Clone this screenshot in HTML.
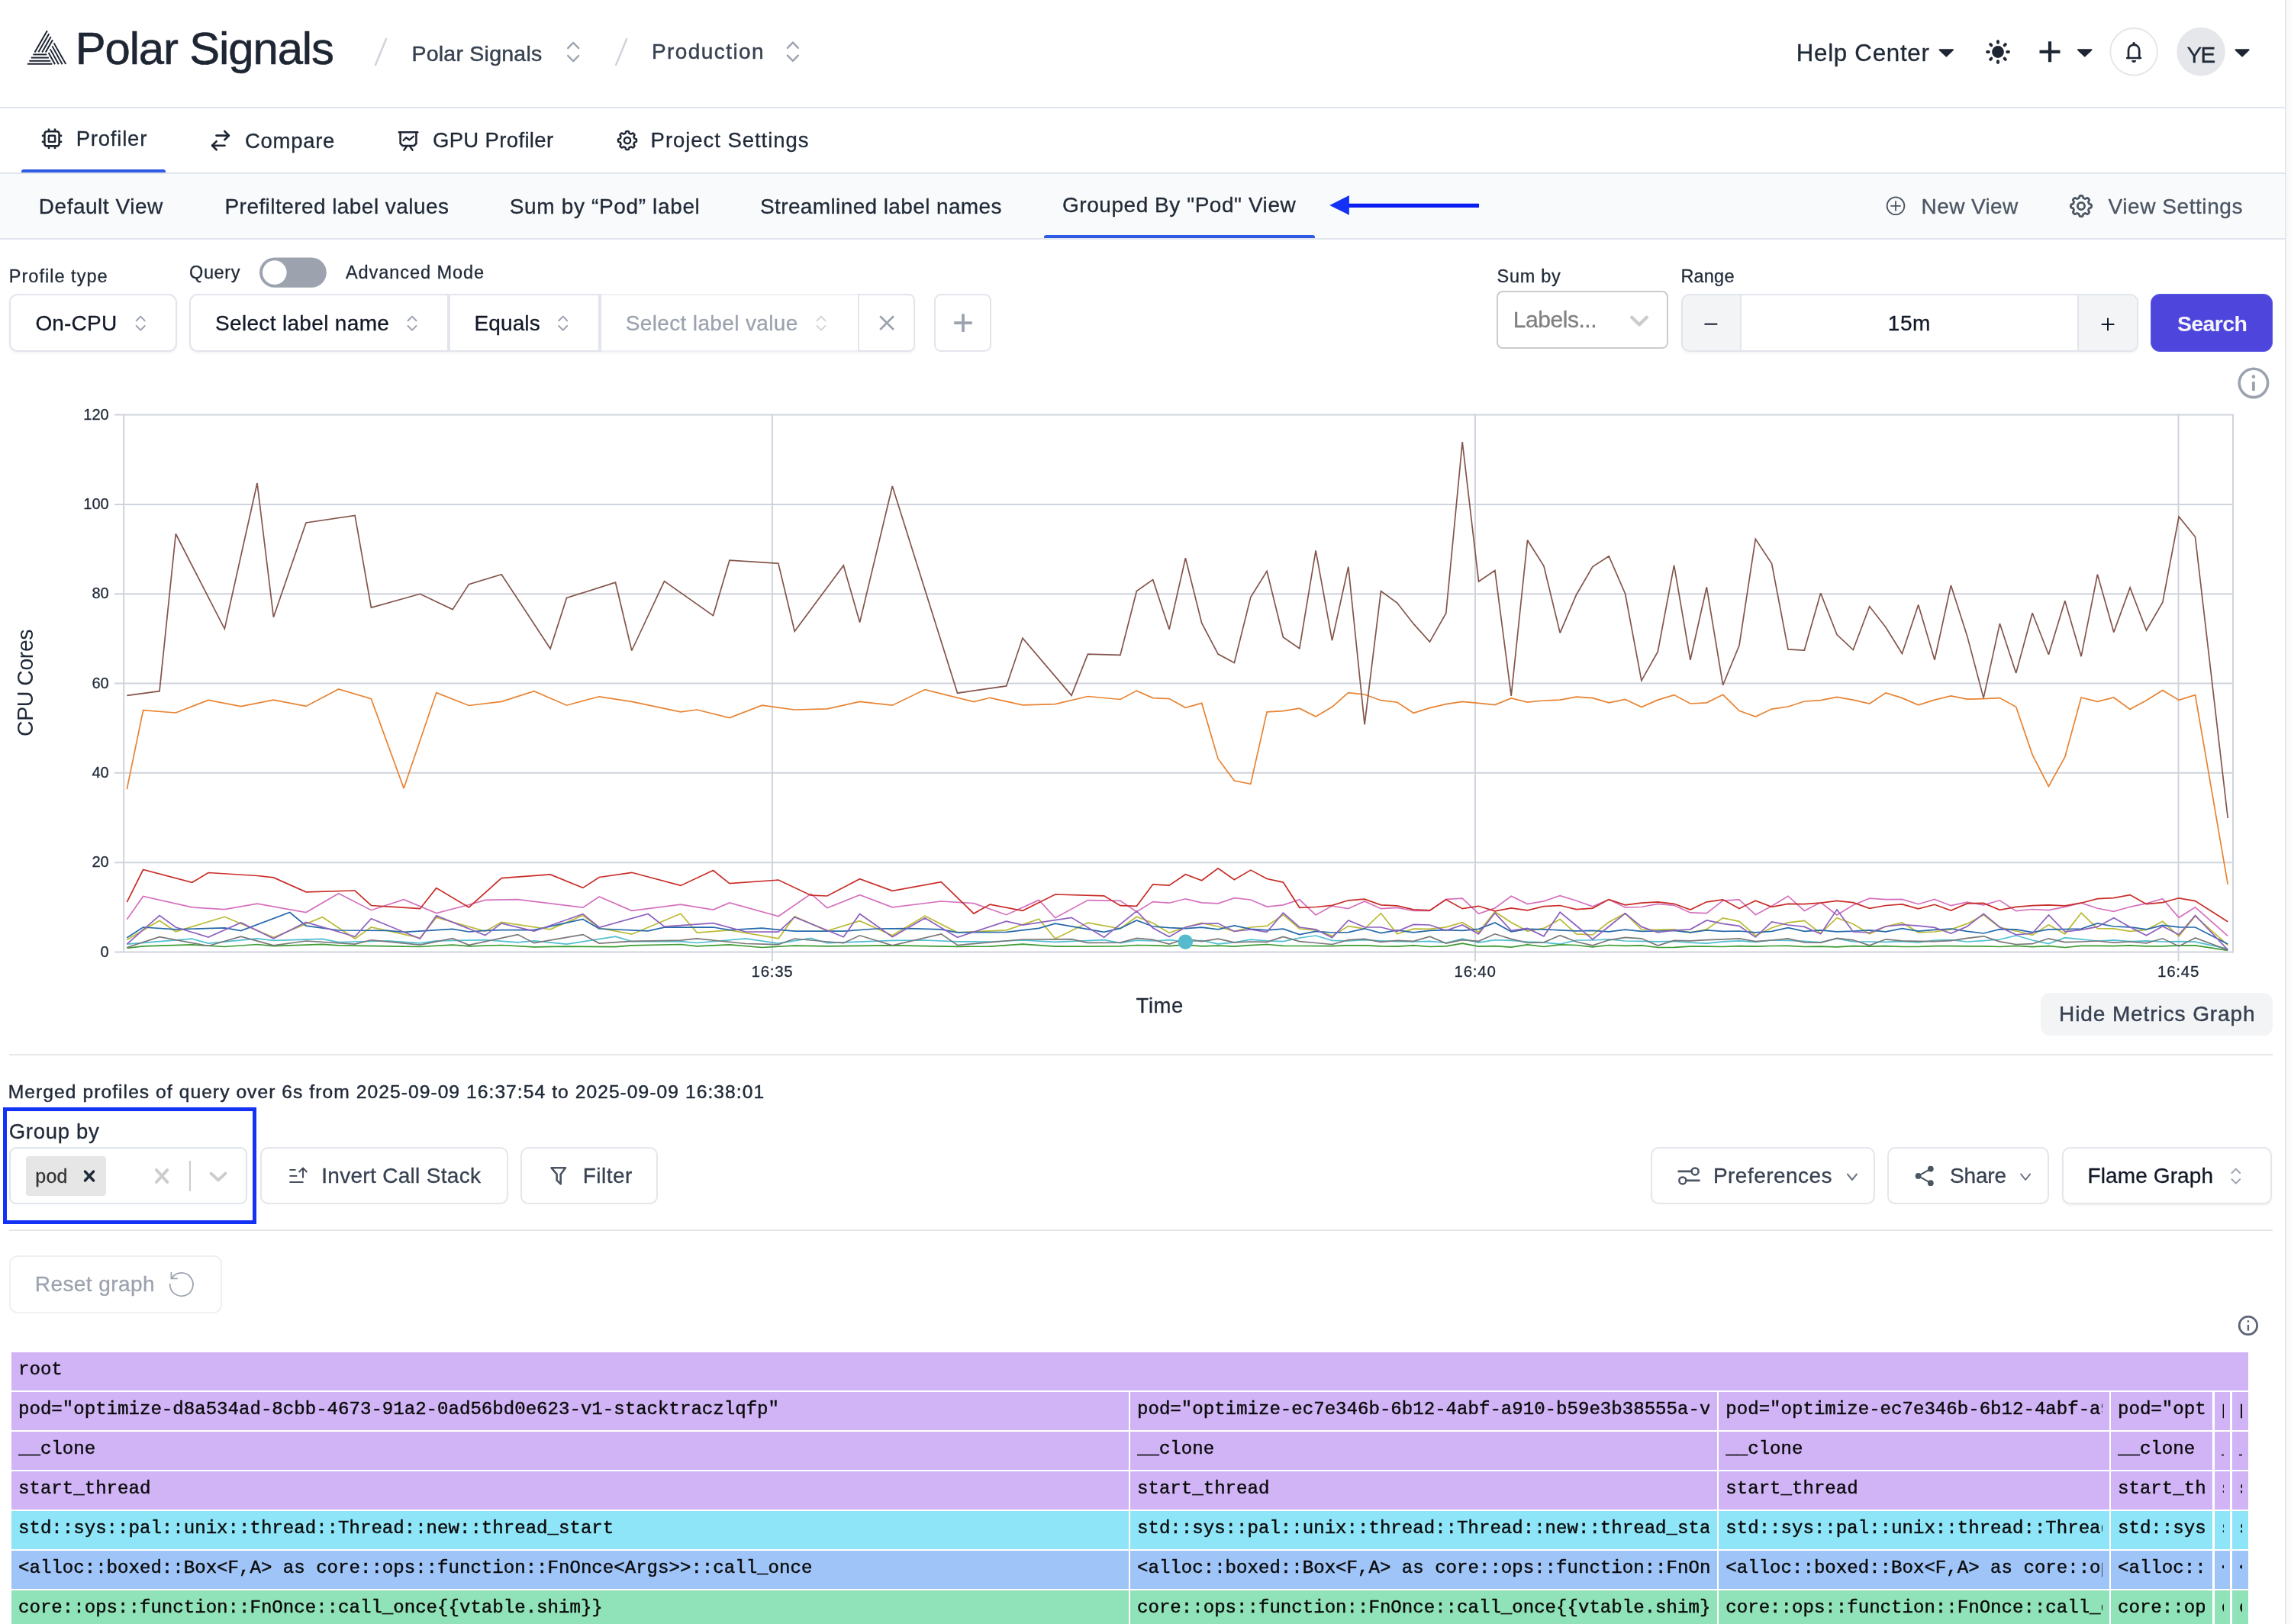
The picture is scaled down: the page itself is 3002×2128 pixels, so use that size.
<!DOCTYPE html><html><head><meta charset="utf-8"><title>Polar Signals</title><style>

html,body{margin:0;padding:0;background:#fff;}
body{width:3002px;height:2128px;position:relative;overflow:hidden;font-family:"Liberation Sans", sans-serif;}
.b{position:absolute;}
.t{position:absolute;line-height:1;white-space:nowrap;font-family:"Liberation Sans", sans-serif;}
.f{position:absolute;overflow:hidden;}
.f span{position:absolute;left:9px;top:0;height:100%;overflow:hidden;white-space:pre;font-family:"Liberation Mono", monospace;font-size:24.08px;line-height:45.2px;color:#0a0a0a;-webkit-text-stroke:0.42px #0a0a0a;}
svg{position:absolute;left:0;top:0;}
.rot{position:absolute;transform-origin:0 0;transform:rotate(-90deg);}

</style></head><body>
<div id="page" style="position:absolute;left:0;top:0;width:3002px;height:2128px;will-change:transform">
<div class="b" style="left:2994px;top:0px;width:2px;height:2128px;background:#e8e8e8;"></div>
<div class="b" style="left:2996px;top:0px;width:6px;height:2128px;background:#fafafa;"></div>
<div class="b" style="left:0px;top:140px;width:2994px;height:2px;background:#e1e5ee;"></div>
<div class="b" style="left:0px;top:226px;width:2994px;height:2px;background:#e1e5ee;"></div>
<div class="b" style="left:28px;top:222px;width:189px;height:4px;background:#2f5ae3;border-radius:3px 3px 0 0;"></div>
<div class="b" style="left:0px;top:228px;width:2994px;height:84px;background:#f9fafb;"></div>
<div class="b" style="left:0px;top:312px;width:2994px;height:2px;background:#e1e5ee;"></div>
<div class="b" style="left:1368px;top:308px;width:355px;height:4px;background:#2f5ae3;border-radius:3px 3px 0 0;"></div>
<div class="b" style="left:12px;top:385px;width:219.5px;height:75.5px;background:#fff;border:2px solid #e2e5ec;border-radius:11px;box-sizing:border-box;box-shadow:0 2px 3px rgba(0,0,0,0.05);"></div>
<div class="b" style="left:248.2px;top:385px;width:951.3px;height:75.5px;background:#fff;border:2px solid #e2e5ec;border-radius:11px 8px 8px 11px;box-sizing:border-box;box-shadow:0 2px 3px rgba(0,0,0,0.05);"></div>
<div class="b" style="left:586px;top:385px;width:3.6px;height:75.5px;background:#e2e5ec;"></div>
<div class="b" style="left:784.2px;top:385px;width:3.6px;height:75.5px;background:#e2e5ec;"></div>
<div class="b" style="left:1124px;top:385px;width:2px;height:75.5px;background:#e2e5ec;"></div>
<div class="b" style="left:787.8px;top:385px;width:336.2px;height:2px;background:#eef0f4;"></div>
<div class="b" style="left:787.8px;top:458.5px;width:336.2px;height:2px;background:#eef0f4;"></div>
<div class="b" style="left:1224.2px;top:385px;width:75.3px;height:75.5px;background:#fff;border:2px solid #e2e5ec;border-radius:9px;box-sizing:border-box;"></div>
<div class="b" style="left:1960.9px;top:381px;width:224.8px;height:75.6px;background:#fff;border:2px solid #cccccc;border-radius:8px;box-sizing:border-box;"></div>
<div class="b" style="left:2202.5px;top:385px;width:599px;height:75.5px;background:#fff;border:2px solid #e2e5ec;border-radius:11px;box-sizing:border-box;overflow:hidden;box-shadow:0 2px 3px rgba(0,0,0,0.05);"></div>
<div class="b" style="left:2204.5px;top:387px;width:76px;height:71.5px;background:#f3f4f6;border-radius:9px 0 0 9px;"></div>
<div class="b" style="left:2724px;top:387px;width:75.5px;height:71.5px;background:#f3f4f6;border-radius:0 9px 9px 0;"></div>
<div class="b" style="left:2280.3px;top:387px;width:2px;height:71.5px;background:#e2e5ec;"></div>
<div class="b" style="left:2722.1px;top:387px;width:2px;height:71.5px;background:#e2e5ec;"></div>
<div class="b" style="left:2818px;top:384.9px;width:160px;height:76px;background:#4e46dc;border:1.6px solid #5a5ae4;border-radius:12px;box-sizing:border-box;"></div>
<div class="b" style="left:2674px;top:1301px;width:304px;height:56px;background:#f3f4f6;border-radius:12px;"></div>
<div class="b" style="left:12px;top:1381px;width:2966px;height:2px;background:#e4e6ea;"></div>
<div class="b" style="left:12px;top:1611px;width:2966px;height:2px;background:#e4e6ea;"></div>
<div class="b" style="left:4.3px;top:1451px;width:332px;height:152.5px;border:5px solid #1432f5;box-sizing:border-box;"></div>
<div class="b" style="left:12.3px;top:1503.3px;width:311.5px;height:75.2px;background:#fff;border:2px solid #dfe4ee;border-radius:9px;box-sizing:border-box;"></div>
<div class="b" style="left:33.9px;top:1515px;width:105.1px;height:51.8px;background:#e6e6e6;border-radius:4px;"></div>
<div class="b" style="left:248px;top:1521.3px;width:2px;height:39.4px;background:#cccccc;"></div>
<div class="b" style="left:340.5px;top:1503.2px;width:325.2px;height:75.2px;background:#fff;border:2px solid #e4e6eb;border-radius:10.5px;box-sizing:border-box;"></div>
<div class="b" style="left:682.2px;top:1503.2px;width:180.2px;height:75.2px;background:#fff;border:2px solid #e4e6eb;border-radius:10.5px;box-sizing:border-box;"></div>
<div class="b" style="left:2162.8px;top:1503.2px;width:293.8px;height:75.2px;background:#fff;border:2px solid #e4e6eb;border-radius:10.5px;box-sizing:border-box;"></div>
<div class="b" style="left:2472.9px;top:1503.2px;width:212.5px;height:75.2px;background:#fff;border:2px solid #e4e6eb;border-radius:10.5px;box-sizing:border-box;"></div>
<div class="b" style="left:2702px;top:1503.2px;width:275.4px;height:75.2px;background:#fff;border:2px solid #e4e6eb;border-radius:10.5px;box-sizing:border-box;box-shadow:0 2px 3px rgba(0,0,0,0.05);"></div>
<div class="b" style="left:12.2px;top:1645px;width:279.2px;height:75.5px;background:#fff;border:2px solid #eef0f3;border-radius:11px;box-sizing:border-box;"></div>
<div class="f" style="left:15px;top:1772px;width:2931px;height:50px;background:#d0b4f6"><span style="width:2912px">root</span></div>
<div class="f" style="left:15px;top:1824px;width:1463.7px;height:50px;background:#d0b4f6"><span style="width:1444.7px">pod="optimize-d8a534ad-8cbb-4673-91a2-0ad56bd0e623-v1-stacktraczlqfp"</span></div>
<div class="f" style="left:1481px;top:1824px;width:769px;height:50px;background:#d0b4f6"><span style="width:750px">pod="optimize-ec7e346b-6b12-4abf-a910-b59e3b38555a-v1-stacktracxxxxx"</span></div>
<div class="f" style="left:2252.3px;top:1824px;width:511.7px;height:50px;background:#d0b4f6"><span style="width:494.1px">pod="optimize-ec7e346b-6b12-4abf-a910-b59e3b38555a-v1-stacktracxxxxx"</span></div>
<div class="f" style="left:2766px;top:1824px;width:133.2px;height:50px;background:#d0b4f6"><span style="width:114.2px">pod="optimize-ec7e346b-6b12-4abf-a910-b59e3b38555a-v1-stacktracxxxxx"</span></div>
<div class="f" style="left:2901.7px;top:1824px;width:20.6px;height:50px;background:#d0b4f6"><span style="width:3.3px">pod="optimize-ec7e346b-6b12-4abf-a910-b59e3b38555a-v1-stacktracxxxxx"</span></div>
<div class="f" style="left:2924.9px;top:1824px;width:21.1px;height:50px;background:#d0b4f6"><span style="width:4.3px">pod="optimize-ec7e346b-6b12-4abf-a910-b59e3b38555a-v1-stacktracxxxxx"</span></div>
<div class="f" style="left:15px;top:1876px;width:1463.7px;height:50px;background:#d0b4f6"><span style="width:1444.7px">__clone</span></div>
<div class="f" style="left:1481px;top:1876px;width:769px;height:50px;background:#d0b4f6"><span style="width:750px">__clone</span></div>
<div class="f" style="left:2252.3px;top:1876px;width:511.7px;height:50px;background:#d0b4f6"><span style="width:494.1px">__clone</span></div>
<div class="f" style="left:2766px;top:1876px;width:133.2px;height:50px;background:#d0b4f6"><span style="width:114.2px">__clone</span></div>
<div class="f" style="left:2901.7px;top:1876px;width:20.6px;height:50px;background:#d0b4f6"><span style="width:3.3px">__clone</span></div>
<div class="f" style="left:2924.9px;top:1876px;width:21.1px;height:50px;background:#d0b4f6"><span style="width:4.3px">__clone</span></div>
<div class="f" style="left:15px;top:1928px;width:1463.7px;height:50px;background:#d0b4f6"><span style="width:1444.7px">start_thread</span></div>
<div class="f" style="left:1481px;top:1928px;width:769px;height:50px;background:#d0b4f6"><span style="width:750px">start_thread</span></div>
<div class="f" style="left:2252.3px;top:1928px;width:511.7px;height:50px;background:#d0b4f6"><span style="width:494.1px">start_thread</span></div>
<div class="f" style="left:2766px;top:1928px;width:133.2px;height:50px;background:#d0b4f6"><span style="width:114.2px">start_thread</span></div>
<div class="f" style="left:2901.7px;top:1928px;width:20.6px;height:50px;background:#d0b4f6"><span style="width:3.3px">start_thread</span></div>
<div class="f" style="left:2924.9px;top:1928px;width:21.1px;height:50px;background:#d0b4f6"><span style="width:4.3px">start_thread</span></div>
<div class="f" style="left:15px;top:1980px;width:1463.7px;height:50px;background:#8ee5f7"><span style="width:1444.7px">std::sys::pal::unix::thread::Thread::new::thread_start</span></div>
<div class="f" style="left:1481px;top:1980px;width:769px;height:50px;background:#8ee5f7"><span style="width:750px">std::sys::pal::unix::thread::Thread::new::thread_start</span></div>
<div class="f" style="left:2252.3px;top:1980px;width:511.7px;height:50px;background:#8ee5f7"><span style="width:494.1px">std::sys::pal::unix::thread::Thread::new::thread_start</span></div>
<div class="f" style="left:2766px;top:1980px;width:133.2px;height:50px;background:#8ee5f7"><span style="width:114.2px">std::sys::pal::unix::thread::Thread::new::thread_start</span></div>
<div class="f" style="left:2901.7px;top:1980px;width:20.6px;height:50px;background:#8ee5f7"><span style="width:3.3px">std::sys::pal::unix::thread::Thread::new::thread_start</span></div>
<div class="f" style="left:2924.9px;top:1980px;width:21.1px;height:50px;background:#8ee5f7"><span style="width:4.3px">std::sys::pal::unix::thread::Thread::new::thread_start</span></div>
<div class="f" style="left:15px;top:2032px;width:1463.7px;height:50px;background:#9ec4f8"><span style="width:1444.7px">&lt;alloc::boxed::Box&lt;F,A&gt; as core::ops::function::FnOnce&lt;Args&gt;&gt;::call_once</span></div>
<div class="f" style="left:1481px;top:2032px;width:769px;height:50px;background:#9ec4f8"><span style="width:750px">&lt;alloc::boxed::Box&lt;F,A&gt; as core::ops::function::FnOnce&lt;Args&gt;&gt;::call_once</span></div>
<div class="f" style="left:2252.3px;top:2032px;width:511.7px;height:50px;background:#9ec4f8"><span style="width:494.1px">&lt;alloc::boxed::Box&lt;F,A&gt; as core::ops::function::FnOnce&lt;Args&gt;&gt;::call_once</span></div>
<div class="f" style="left:2766px;top:2032px;width:133.2px;height:50px;background:#9ec4f8"><span style="width:114.2px">&lt;alloc::boxed::Box&lt;F,A&gt; as core::ops::function::FnOnce&lt;Args&gt;&gt;::call_once</span></div>
<div class="f" style="left:2901.7px;top:2032px;width:20.6px;height:50px;background:#9ec4f8"><span style="width:3.3px">&lt;alloc::boxed::Box&lt;F,A&gt; as core::ops::function::FnOnce&lt;Args&gt;&gt;::call_once</span></div>
<div class="f" style="left:2924.9px;top:2032px;width:21.1px;height:50px;background:#9ec4f8"><span style="width:4.3px">&lt;alloc::boxed::Box&lt;F,A&gt; as core::ops::function::FnOnce&lt;Args&gt;&gt;::call_once</span></div>
<div class="f" style="left:15px;top:2084px;width:1463.7px;height:44px;background:#90e2b8"><span style="width:1444.7px">core::ops::function::FnOnce::call_once{{vtable.shim}}</span></div>
<div class="f" style="left:1481px;top:2084px;width:769px;height:44px;background:#90e2b8"><span style="width:750px">core::ops::function::FnOnce::call_once{{vtable.shim}}</span></div>
<div class="f" style="left:2252.3px;top:2084px;width:511.7px;height:44px;background:#90e2b8"><span style="width:494.1px">core::ops::function::FnOnce::call_once{{vtable.shim}}</span></div>
<div class="f" style="left:2766px;top:2084px;width:133.2px;height:44px;background:#90e2b8"><span style="width:114.2px">core::ops::function::FnOnce::call_once{{vtable.shim}}</span></div>
<div class="f" style="left:2901.7px;top:2084px;width:20.6px;height:44px;background:#90e2b8"><span style="width:3.3px">core::ops::function::FnOnce::call_once{{vtable.shim}}</span></div>
<div class="f" style="left:2924.9px;top:2084px;width:21.1px;height:44px;background:#90e2b8"><span style="width:4.3px">core::ops::function::FnOnce::call_once{{vtable.shim}}</span></div>
<svg width="3002" height="2128" viewBox="0 0 3002 2128">
<line x1="45.5502" y1="68.4331" x2="61.8498" y2="40.1669" stroke="#1e2533" stroke-width="1.95" stroke-linecap="butt"/>
<line x1="50.3499" y1="68.233" x2="64.2501" y2="44.167" stroke="#1e2533" stroke-width="1.95" stroke-linecap="butt"/>
<line x1="55.1534" y1="68.4349" x2="66.6466" y2="48.1651" stroke="#1e2533" stroke-width="1.95" stroke-linecap="butt"/>
<line x1="59.7519" y1="68.4341" x2="69.0481" y2="52.1659" stroke="#1e2533" stroke-width="1.95" stroke-linecap="butt"/>
<line x1="70.5533" y1="56.3651" x2="86.2467" y2="84.0349" stroke="#1e2533" stroke-width="1.95" stroke-linecap="butt"/>
<line x1="68.3569" y1="60.3631" x2="81.6431" y2="84.2369" stroke="#1e2533" stroke-width="1.95" stroke-linecap="butt"/>
<line x1="65.7564" y1="64.3634" x2="76.8436" y2="84.2366" stroke="#1e2533" stroke-width="1.95" stroke-linecap="butt"/>
<line x1="63.5572" y1="68.9629" x2="72.0428" y2="84.2371" stroke="#1e2533" stroke-width="1.95" stroke-linecap="butt"/>
<line x1="43.3" y1="71.4" x2="61.3" y2="71.4" stroke="#1e2533" stroke-width="1.95" stroke-linecap="butt"/>
<line x1="40.7" y1="75.6" x2="63.9" y2="75.6" stroke="#1e2533" stroke-width="1.95" stroke-linecap="butt"/>
<line x1="38.3" y1="79.8" x2="66.1" y2="79.8" stroke="#1e2533" stroke-width="1.95" stroke-linecap="butt"/>
<line x1="35.9" y1="83.8" x2="68.3" y2="83.8" stroke="#1e2533" stroke-width="1.95" stroke-linecap="butt"/>
<line x1="492" y1="85" x2="506" y2="51" stroke="#d1d5db" stroke-width="2.6" stroke-linecap="round"/>
<line x1="807.2" y1="85" x2="821.2" y2="51" stroke="#d1d5db" stroke-width="2.6" stroke-linecap="round"/>
<path d="M744.2 63.2 L751.2 56 L758.2 63.2" fill="none" stroke="#9ca3af" stroke-width="2.4" stroke-linejoin="round" stroke-linecap="round"/>
<path d="M744.2 73 L751.2 80.2 L758.2 73" fill="none" stroke="#9ca3af" stroke-width="2.4" stroke-linejoin="round" stroke-linecap="round"/>
<path d="M1031.9 62.8 L1038.9 55.6 L1045.9 62.8" fill="none" stroke="#9ca3af" stroke-width="2.4" stroke-linejoin="round" stroke-linecap="round"/>
<path d="M1031.9 72.6 L1038.9 79.8 L1045.9 72.6" fill="none" stroke="#9ca3af" stroke-width="2.4" stroke-linejoin="round" stroke-linecap="round"/>
<path d="M2541.6 65.2 L2559 65.2 L2550.3 73.6 Z" fill="#1e2533" stroke="#1e2533" stroke-width="2" stroke-linejoin="round" stroke-linecap="round" />
<path d="M2723 65.2 L2740.5 65.2 L2731.75 73.6 Z" fill="#1e2533" stroke="#1e2533" stroke-width="2" stroke-linejoin="round" stroke-linecap="round" />
<path d="M2929.5 65.2 L2946.6 65.2 L2938.05 73.6 Z" fill="#1e2533" stroke="#1e2533" stroke-width="2" stroke-linejoin="round" stroke-linecap="round" />
<circle cx="2618" cy="68" r="7.9" fill="#1e2533" stroke="none" stroke-width="0"/>
<line x1="2630.2" y1="68" x2="2631.9" y2="68" stroke="#1e2533" stroke-width="3.9" stroke-linecap="round"/>
<line x1="2626.63" y1="76.6267" x2="2627.83" y2="77.8288" stroke="#1e2533" stroke-width="3.9" stroke-linecap="round"/>
<line x1="2618" y1="80.2" x2="2618" y2="81.9" stroke="#1e2533" stroke-width="3.9" stroke-linecap="round"/>
<line x1="2609.37" y1="76.6267" x2="2608.17" y2="77.8288" stroke="#1e2533" stroke-width="3.9" stroke-linecap="round"/>
<line x1="2605.8" y1="68" x2="2604.1" y2="68" stroke="#1e2533" stroke-width="3.9" stroke-linecap="round"/>
<line x1="2609.37" y1="59.3733" x2="2608.17" y2="58.1712" stroke="#1e2533" stroke-width="3.9" stroke-linecap="round"/>
<line x1="2618" y1="55.8" x2="2618" y2="54.1" stroke="#1e2533" stroke-width="3.9" stroke-linecap="round"/>
<line x1="2626.63" y1="59.3733" x2="2627.83" y2="58.1712" stroke="#1e2533" stroke-width="3.9" stroke-linecap="round"/>
<line x1="2672.5" y1="67.8" x2="2699.5" y2="67.8" stroke="#1e2533" stroke-width="4.2" stroke-linecap="butt"/>
<line x1="2686" y1="54.3" x2="2686" y2="81.3" stroke="#1e2533" stroke-width="4.2" stroke-linecap="butt"/>
<circle cx="2796.1" cy="67.7" r="30.8" fill="#fff" stroke="#e5e7eb" stroke-width="2"/>
<path d="M2789 76 L2789 65.6 A7.1 7.1 0 0 1 2803.2 65.6 L2803.2 76" fill="none" stroke="#1e2533" stroke-width="2.7" stroke-linejoin="round" stroke-linecap="round" />
<line x1="2787.2" y1="76" x2="2805" y2="76" stroke="#1e2533" stroke-width="2.7" stroke-linecap="round"/>
<circle cx="2796.1" cy="56.6" r="1.7" fill="#1e2533" stroke="none" stroke-width="0"/>
<path d="M2793.2 79 A2.9 2.9 0 0 0 2799 79 Z" fill="#1e2533" stroke="none" stroke-width="0" stroke-linejoin="round" stroke-linecap="round" />
<circle cx="2884" cy="67.7" r="31.8" fill="#e5e7eb" stroke="none" stroke-width="0"/>
<rect x="58.4" y="172.2" width="19.2" height="19.2" rx="3.2" fill="none" stroke="#1e2533" stroke-width="2.6"/>
<rect x="63.9" y="177.7" width="8.2" height="8.2" rx="0.5" fill="none" stroke="#1e2533" stroke-width="2.4"/>
<line x1="64" y1="168.5" x2="64" y2="171.2" stroke="#1e2533" stroke-width="2.5" stroke-linecap="butt"/>
<line x1="64" y1="192.4" x2="64" y2="195.1" stroke="#1e2533" stroke-width="2.5" stroke-linecap="butt"/>
<line x1="72" y1="168.5" x2="72" y2="171.2" stroke="#1e2533" stroke-width="2.5" stroke-linecap="butt"/>
<line x1="72" y1="192.4" x2="72" y2="195.1" stroke="#1e2533" stroke-width="2.5" stroke-linecap="butt"/>
<line x1="54.8" y1="177.8" x2="57.4" y2="177.8" stroke="#1e2533" stroke-width="2.5" stroke-linecap="butt"/>
<line x1="78.6" y1="177.8" x2="81.2" y2="177.8" stroke="#1e2533" stroke-width="2.5" stroke-linecap="butt"/>
<line x1="54.8" y1="185.8" x2="57.4" y2="185.8" stroke="#1e2533" stroke-width="2.5" stroke-linecap="butt"/>
<line x1="78.6" y1="185.8" x2="81.2" y2="185.8" stroke="#1e2533" stroke-width="2.5" stroke-linecap="butt"/>
<line x1="283.5" y1="177.6" x2="299.5" y2="177.6" stroke="#1e2533" stroke-width="2.6" stroke-linecap="round"/>
<path d="M294.3 172 L300 177.6 L294.3 183.2" fill="none" stroke="#1e2533" stroke-width="2.6" stroke-linejoin="round" stroke-linecap="round"/>
<line x1="278.5" y1="190.7" x2="294.5" y2="190.7" stroke="#1e2533" stroke-width="2.6" stroke-linecap="round"/>
<path d="M283.7 185.1 L278 190.7 L283.7 196.3" fill="none" stroke="#1e2533" stroke-width="2.6" stroke-linejoin="round" stroke-linecap="round"/>
<line x1="522.8" y1="173.2" x2="547.2" y2="173.2" stroke="#1e2533" stroke-width="2.5" stroke-linecap="round"/>
<path d="M524.6 173.2 L524.6 188 L527.6 191 L542.4 191 L545.4 188 L545.4 173.2" fill="none" stroke="#1e2533" stroke-width="2.5" stroke-linejoin="round" stroke-linecap="round"/>
<path d="M529.5 196.6 L533 191.5" fill="none" stroke="#1e2533" stroke-width="2.5" stroke-linejoin="round" stroke-linecap="round"/>
<path d="M540.5 196.6 L537 191.5" fill="none" stroke="#1e2533" stroke-width="2.5" stroke-linejoin="round" stroke-linecap="round"/>
<path d="M528.6 184 L532.2 180.3 L536.3 183.3 L541.8 178.8" fill="none" stroke="#1e2533" stroke-width="2.3" stroke-linejoin="round" stroke-linecap="round"/>
<path d="M822 171.9 L822.47 171.91 L822.95 171.97 L823.41 172.11 L823.82 172.5 L824.11 173.38 L824.34 174.26 L824.63 174.68 L824.96 174.88 L825.31 175.03 L825.66 175.17 L826 175.31 L826.35 175.46 L826.73 175.55 L827.23 175.46 L828.02 175 L828.84 174.58 L829.41 174.6 L829.84 174.82 L830.21 175.12 L830.56 175.44 L830.88 175.79 L831.18 176.16 L831.4 176.59 L831.42 177.16 L831 177.98 L830.54 178.77 L830.45 179.27 L830.54 179.65 L830.69 180 L830.83 180.34 L830.97 180.69 L831.12 181.04 L831.32 181.37 L831.74 181.66 L832.62 181.89 L833.5 182.18 L833.89 182.59 L834.03 183.05 L834.09 183.53 L834.1 184 L834.09 184.47 L834.03 184.95 L833.89 185.41 L833.5 185.82 L832.62 186.11 L831.74 186.34 L831.32 186.63 L831.12 186.96 L830.97 187.31 L830.83 187.66 L830.69 188 L830.54 188.35 L830.45 188.73 L830.54 189.23 L831 190.02 L831.42 190.84 L831.4 191.41 L831.18 191.84 L830.88 192.21 L830.56 192.56 L830.21 192.88 L829.84 193.18 L829.41 193.4 L828.84 193.42 L828.02 193 L827.23 192.54 L826.73 192.45 L826.35 192.54 L826 192.69 L825.66 192.83 L825.31 192.97 L824.96 193.12 L824.63 193.32 L824.34 193.74 L824.11 194.62 L823.82 195.5 L823.41 195.89 L822.95 196.03 L822.47 196.09 L822 196.1 L821.53 196.09 L821.05 196.03 L820.59 195.89 L820.18 195.5 L819.89 194.62 L819.66 193.74 L819.37 193.32 L819.04 193.12 L818.69 192.97 L818.34 192.83 L818 192.69 L817.65 192.54 L817.27 192.45 L816.77 192.54 L815.98 193 L815.16 193.42 L814.59 193.4 L814.16 193.18 L813.79 192.88 L813.44 192.56 L813.12 192.21 L812.82 191.84 L812.6 191.41 L812.58 190.84 L813 190.02 L813.46 189.23 L813.55 188.73 L813.46 188.35 L813.31 188 L813.17 187.66 L813.03 187.31 L812.88 186.96 L812.68 186.63 L812.26 186.34 L811.38 186.11 L810.5 185.82 L810.11 185.41 L809.97 184.95 L809.91 184.47 L809.9 184 L809.91 183.53 L809.97 183.05 L810.11 182.59 L810.5 182.18 L811.38 181.89 L812.26 181.66 L812.68 181.37 L812.88 181.04 L813.03 180.69 L813.17 180.34 L813.31 180 L813.46 179.65 L813.55 179.27 L813.46 178.77 L813 177.98 L812.58 177.16 L812.6 176.59 L812.82 176.16 L813.12 175.79 L813.44 175.44 L813.79 175.12 L814.16 174.82 L814.59 174.6 L815.16 174.58 L815.98 175 L816.77 175.46 L817.27 175.55 L817.65 175.46 L818 175.31 L818.34 175.17 L818.69 175.03 L819.04 174.88 L819.37 174.68 L819.66 174.26 L819.89 173.38 L820.18 172.5 L820.59 172.11 L821.05 171.97 L821.53 171.91 Z" fill="none" stroke="#1e2533" stroke-width="2.5" stroke-linejoin="round" stroke-linecap="round"/>
<circle cx="822" cy="184" r="4.1" fill="none" stroke="#1e2533" stroke-width="2.5"/>
<circle cx="2484" cy="269.8" r="11.4" fill="none" stroke="#4b5563" stroke-width="1.8"/>
<line x1="2478" y1="269.8" x2="2490" y2="269.8" stroke="#4b5563" stroke-width="1.8" stroke-linecap="round"/>
<line x1="2484" y1="263.8" x2="2484" y2="275.8" stroke="#4b5563" stroke-width="1.8" stroke-linecap="round"/>
<path d="M2727 256.4 L2727.53 256.42 L2728.06 256.48 L2728.58 256.63 L2729.05 257.07 L2729.37 258.06 L2729.63 259.05 L2729.95 259.53 L2730.33 259.75 L2730.72 259.91 L2731.11 260.07 L2731.5 260.24 L2731.89 260.4 L2732.32 260.5 L2732.88 260.4 L2733.76 259.88 L2734.69 259.41 L2735.33 259.43 L2735.81 259.68 L2736.23 260.02 L2736.62 260.38 L2736.98 260.77 L2737.32 261.19 L2737.57 261.67 L2737.59 262.31 L2737.12 263.24 L2736.6 264.12 L2736.5 264.68 L2736.6 265.11 L2736.76 265.5 L2736.93 265.89 L2737.09 266.28 L2737.25 266.67 L2737.47 267.05 L2737.95 267.37 L2738.94 267.63 L2739.93 267.95 L2740.37 268.42 L2740.52 268.94 L2740.58 269.47 L2740.6 270 L2740.58 270.53 L2740.52 271.06 L2740.37 271.58 L2739.93 272.05 L2738.94 272.37 L2737.95 272.63 L2737.47 272.95 L2737.25 273.33 L2737.09 273.72 L2736.93 274.11 L2736.76 274.5 L2736.6 274.89 L2736.5 275.32 L2736.6 275.88 L2737.12 276.76 L2737.59 277.69 L2737.57 278.33 L2737.32 278.81 L2736.98 279.23 L2736.62 279.62 L2736.23 279.98 L2735.81 280.32 L2735.33 280.57 L2734.69 280.59 L2733.76 280.12 L2732.88 279.6 L2732.32 279.5 L2731.89 279.6 L2731.5 279.76 L2731.11 279.93 L2730.72 280.09 L2730.33 280.25 L2729.95 280.47 L2729.63 280.95 L2729.37 281.94 L2729.05 282.93 L2728.58 283.37 L2728.06 283.52 L2727.53 283.58 L2727 283.6 L2726.47 283.58 L2725.94 283.52 L2725.42 283.37 L2724.95 282.93 L2724.63 281.94 L2724.37 280.95 L2724.05 280.47 L2723.67 280.25 L2723.28 280.09 L2722.89 279.93 L2722.5 279.76 L2722.11 279.6 L2721.68 279.5 L2721.12 279.6 L2720.24 280.12 L2719.31 280.59 L2718.67 280.57 L2718.19 280.32 L2717.77 279.98 L2717.38 279.62 L2717.02 279.23 L2716.68 278.81 L2716.43 278.33 L2716.41 277.69 L2716.88 276.76 L2717.4 275.88 L2717.5 275.32 L2717.4 274.89 L2717.24 274.5 L2717.07 274.11 L2716.91 273.72 L2716.75 273.33 L2716.53 272.95 L2716.05 272.63 L2715.06 272.37 L2714.07 272.05 L2713.63 271.58 L2713.48 271.06 L2713.42 270.53 L2713.4 270 L2713.42 269.47 L2713.48 268.94 L2713.63 268.42 L2714.07 267.95 L2715.06 267.63 L2716.05 267.37 L2716.53 267.05 L2716.75 266.67 L2716.91 266.28 L2717.07 265.89 L2717.24 265.5 L2717.4 265.11 L2717.5 264.68 L2717.4 264.12 L2716.88 263.24 L2716.41 262.31 L2716.43 261.67 L2716.68 261.19 L2717.02 260.77 L2717.38 260.38 L2717.77 260.02 L2718.19 259.68 L2718.67 259.43 L2719.31 259.41 L2720.24 259.88 L2721.12 260.4 L2721.68 260.5 L2722.11 260.4 L2722.5 260.24 L2722.89 260.07 L2723.28 259.91 L2723.67 259.75 L2724.05 259.53 L2724.37 259.05 L2724.63 258.06 L2724.95 257.07 L2725.42 256.63 L2725.94 256.48 L2726.47 256.42 Z" fill="none" stroke="#4b5563" stroke-width="2.8" stroke-linejoin="round" stroke-linecap="round"/>
<circle cx="2727" cy="270" r="4.6" fill="none" stroke="#4b5563" stroke-width="2.8"/>
<line x1="1764" y1="269.35" x2="1938" y2="269.35" stroke="#0a1ef1" stroke-width="5.1" stroke-linecap="butt"/>
<path d="M1742.2 268.9 L1767.9 256 L1767.9 281.8 Z" fill="#1432f5" stroke="none" stroke-width="0" stroke-linejoin="round" stroke-linecap="round" />
<rect x="340" y="337.4" width="87.8" height="39.4" rx="19.7" fill="#9ca3af" stroke="none" stroke-width="0"/>
<circle cx="359.8" cy="357.1" r="15.8" fill="#fff" stroke="none" stroke-width="0"/>
<path d="M178.7 420.2 L184.2 414.6 L189.7 420.2" fill="none" stroke="#9ca3af" stroke-width="2" stroke-linejoin="round" stroke-linecap="round"/>
<path d="M178.7 427 L184.2 432.6 L189.7 427" fill="none" stroke="#9ca3af" stroke-width="2" stroke-linejoin="round" stroke-linecap="round"/>
<path d="M534.5 420.2 L540 414.6 L545.5 420.2" fill="none" stroke="#9ca3af" stroke-width="2" stroke-linejoin="round" stroke-linecap="round"/>
<path d="M534.5 427 L540 432.6 L545.5 427" fill="none" stroke="#9ca3af" stroke-width="2" stroke-linejoin="round" stroke-linecap="round"/>
<path d="M732.2 420.2 L737.7 414.6 L743.2 420.2" fill="none" stroke="#9ca3af" stroke-width="2" stroke-linejoin="round" stroke-linecap="round"/>
<path d="M732.2 427 L737.7 432.6 L743.2 427" fill="none" stroke="#9ca3af" stroke-width="2" stroke-linejoin="round" stroke-linecap="round"/>
<path d="M1070.5 420.2 L1076 414.6 L1081.5 420.2" fill="none" stroke="#d1d5db" stroke-width="2" stroke-linejoin="round" stroke-linecap="round"/>
<path d="M1070.5 427 L1076 432.6 L1081.5 427" fill="none" stroke="#d1d5db" stroke-width="2" stroke-linejoin="round" stroke-linecap="round"/>
<line x1="1153.2" y1="414.2" x2="1171" y2="432" stroke="#9ca3af" stroke-width="2.7" stroke-linecap="butt"/>
<line x1="1171" y1="414.2" x2="1153.2" y2="432" stroke="#9ca3af" stroke-width="2.7" stroke-linecap="butt"/>
<line x1="1250.2" y1="423.1" x2="1273.8" y2="423.1" stroke="#9ca3af" stroke-width="3.8" stroke-linecap="butt"/>
<line x1="1262" y1="411.3" x2="1262" y2="434.9" stroke="#9ca3af" stroke-width="3.8" stroke-linecap="butt"/>
<path d="M2138.2 415.8 L2148 425.4 L2157.8 415.8" fill="none" stroke="#cccccc" stroke-width="4.4" stroke-linejoin="round" stroke-linecap="round"/>
<line x1="2233.5" y1="424.7" x2="2250.3" y2="424.7" stroke="#111827" stroke-width="2" stroke-linecap="butt"/>
<line x1="2753.7" y1="425" x2="2770.4" y2="425" stroke="#111827" stroke-width="2" stroke-linecap="butt"/>
<line x1="2762" y1="416.8" x2="2762" y2="433.2" stroke="#111827" stroke-width="2" stroke-linecap="butt"/>
<circle cx="2952.9" cy="501.9" r="18.7" fill="none" stroke="#9ca3af" stroke-width="3.6"/>
<line x1="2952.9" y1="500.2" x2="2952.9" y2="512.1" stroke="#9ca3af" stroke-width="3.9" stroke-linecap="butt"/>
<circle cx="2952.9" cy="493.6" r="2.3" fill="#9ca3af" stroke="none" stroke-width="0"/>
<line x1="150" y1="1247.5" x2="2926" y2="1247.5" stroke="#cfd3db" stroke-width="2"/>
<line x1="150" y1="1130.18" x2="2926" y2="1130.18" stroke="#cfd3db" stroke-width="2"/>
<line x1="150" y1="1012.86" x2="2926" y2="1012.86" stroke="#cfd3db" stroke-width="2"/>
<line x1="150" y1="895.54" x2="2926" y2="895.54" stroke="#cfd3db" stroke-width="2"/>
<line x1="150" y1="778.22" x2="2926" y2="778.22" stroke="#cfd3db" stroke-width="2"/>
<line x1="150" y1="660.9" x2="2926" y2="660.9" stroke="#cfd3db" stroke-width="2"/>
<line x1="150" y1="543.58" x2="2926" y2="543.58" stroke="#cfd3db" stroke-width="2"/>
<line x1="162.2" y1="542.6" x2="162.2" y2="1248.5" stroke="#cfd3db" stroke-width="2"/>
<line x1="2926" y1="542.6" x2="2926" y2="1248.5" stroke="#cfd3db" stroke-width="2"/>
<line x1="1011.9" y1="542.6" x2="1011.9" y2="1259.5" stroke="#cfd3db" stroke-width="2"/>
<line x1="1933" y1="542.6" x2="1933" y2="1259.5" stroke="#cfd3db" stroke-width="2"/>
<line x1="2854.5" y1="542.6" x2="2854.5" y2="1259.5" stroke="#cfd3db" stroke-width="2"/>
<polyline points="166.3,1237.1 251.7,1230.2 273,1236.1 337,1229.8 358.4,1232.4 422.4,1230.4 443.7,1234.6 465.1,1234 507.7,1232.8 550.4,1235.9 571.8,1232.8 635.8,1231.6 678.5,1234.9 699.8,1232.8 742.5,1237.1 806.5,1227.2 827.8,1233.6 891.9,1233.6 913.2,1235.5 977.2,1229.8 1019.9,1236.1 1062.6,1229.4 1083.9,1235.7 1105.3,1234.9 1169.3,1232.4 1212,1232 1254.6,1233.8 1297.3,1234 1340,1232 1382.7,1234.4 1446.7,1231.6 1468,1235.7 1489.4,1232.2 1510.7,1233 1532.1,1231.6 1553.4,1234 1574.7,1232.4 1596.1,1236.9 1617.4,1234.9 1638.8,1231.2 1660.1,1232.8 1681.4,1233.6 1702.8,1229 1724.1,1226 1745.5,1232.4 1766.8,1232.8 1788.1,1231.6 1809.5,1232.8 1830.8,1233.6 1852.2,1234 1873.5,1233.4 1894.8,1235.5 1916.2,1230.2 1937.5,1235.1 1958.9,1231.6 1980.2,1232.4 2001.5,1234 2022.9,1234.9 2044.2,1237.1 2065.6,1232 2086.9,1232 2108.2,1230.8 2129.6,1233 2150.9,1233.4 2172.3,1233.8 2193.6,1233.4 2214.9,1235.1 2236.3,1236.1 2257.6,1233.8 2279,1232.8 2300.3,1234.4 2321.6,1232 2343,1232.4 2364.3,1233.4 2385.7,1234.9 2407,1230 2428.3,1233.8 2449.7,1234 2471,1234.4 2492.4,1233.6 2513.7,1234.9 2535,1232 2556.4,1231.6 2577.7,1234 2599.1,1232.6 2620.4,1231 2641.7,1225.8 2663.1,1232 2684.4,1236.5 2705.8,1228.6 2727.1,1230.8 2748.4,1233 2769.8,1231.8 2791.1,1233.6 2812.5,1232.8 2833.8,1234 2855.1,1233.6 2876.5,1234.2 2919.2,1243.4" fill="none" stroke="#50bed2" stroke-width="1.7" stroke-linejoin="miter" stroke-miterlimit="3"/>
<polyline points="166.3,1231.6 209,1206.3 230.3,1220.8 294.3,1201.3 358.4,1228.4 422.4,1201.7 465.1,1230 486.4,1215 550.4,1229 571.8,1202.3 635.8,1220.4 657.1,1208.5 721.1,1217.8 763.8,1199.5 785.2,1216 827.8,1224.2 891.9,1197.3 913.2,1222 955.9,1218.8 1019.9,1229.8 1041.2,1200.9 1083.9,1219.8 1126.6,1206.7 1169.3,1225.8 1212,1200.3 1254.6,1221.8 1318.7,1218.8 1361.3,1204.3 1382.7,1230 1425.4,1209.1 1468,1216.8 1489.4,1201.3 1510.7,1209.4 1532.1,1222.4 1553.4,1215 1574.7,1209.4 1596.1,1214 1617.4,1220.4 1638.8,1215 1660.1,1213.4 1681.4,1198.7 1702.8,1217 1724.1,1218.8 1745.5,1226.4 1766.8,1213.6 1788.1,1217 1809.5,1196.7 1830.8,1223.8 1852.2,1217.2 1873.5,1217.4 1894.8,1214.8 1916.2,1208.7 1937.5,1221.4 1958.9,1194.7 1980.2,1208.7 2001.5,1220 2022.9,1216.4 2044.2,1204.5 2065.6,1223.8 2086.9,1225 2108.2,1208.3 2129.6,1196.9 2150.9,1218 2172.3,1218.4 2193.6,1217.8 2214.9,1221.8 2236.3,1217.8 2257.6,1202.9 2279,1207.3 2300.3,1226 2321.6,1215.8 2343,1208.9 2364.3,1206.3 2385.7,1222.8 2407,1202.7 2428.3,1210.8 2449.7,1223.8 2471,1214 2492.4,1208.9 2513.7,1221.8 2535,1221 2556.4,1217.8 2577.7,1210.4 2599.1,1198.9 2620.4,1215.4 2641.7,1219.8 2663.1,1225.4 2684.4,1211.8 2705.8,1223.8 2727.1,1196.3 2748.4,1216.6 2769.8,1216.8 2791.1,1220.4 2812.5,1218.4 2833.8,1207.3 2855.1,1226.8 2876.5,1200.4 2919.2,1238.3" fill="none" stroke="#babb34" stroke-width="1.7" stroke-linejoin="miter" stroke-miterlimit="3"/>
<polyline points="166.3,1228.8 187.6,1215 230.3,1217.8 294.3,1215.8 315.7,1219.6 379.7,1195.5 401,1213.2 443.7,1219 507.7,1219.4 529.1,1221.4 593.1,1217.4 614.4,1221 635.8,1219.4 657.1,1218.6 699.8,1218.6 763.8,1204.5 785.2,1217 849.2,1219.8 870.5,1215.2 934.5,1215 955.9,1218.6 998.6,1216.2 1041.2,1220.2 1105.3,1220.2 1147.9,1217 1190.6,1216.6 1233.3,1217.8 1254.6,1221.8 1318.7,1221.4 1361.3,1216.4 1382.7,1210.2 1446.7,1221.4 1468,1216.4 1489.4,1205.9 1510.7,1214 1532.1,1215.6 1553.4,1216.6 1574.7,1215.2 1596.1,1217.8 1617.4,1212.8 1638.8,1217.4 1660.1,1218.8 1681.4,1217.2 1702.8,1224.6 1724.1,1220.4 1745.5,1222 1766.8,1221.6 1788.1,1216.8 1809.5,1222.6 1830.8,1218.8 1852.2,1221.8 1873.5,1219.4 1894.8,1218.6 1916.2,1219.4 1937.5,1217.4 1958.9,1208.9 1980.2,1220.8 2001.5,1217.4 2022.9,1217.8 2044.2,1218.8 2065.6,1219.8 2086.9,1219.4 2108.2,1220.8 2129.6,1218.2 2150.9,1220.4 2172.3,1220 2193.6,1219.4 2214.9,1221.8 2236.3,1218.8 2257.6,1220.4 2279,1220 2300.3,1221.8 2321.6,1220.4 2343,1215.6 2364.3,1220.4 2385.7,1218.8 2407,1220.8 2428.3,1220.2 2449.7,1218.8 2471,1220.8 2492.4,1216.6 2513.7,1220.2 2535,1218.4 2556.4,1217 2577.7,1220.4 2599.1,1223 2620.4,1217.6 2641.7,1217.8 2663.1,1221.6 2684.4,1217.8 2705.8,1217.6 2727.1,1217 2748.4,1210 2769.8,1214 2791.1,1214.8 2812.5,1217.8 2833.8,1212.4 2855.1,1214.8 2876.5,1215 2919.2,1237" fill="none" stroke="#2568aa" stroke-width="1.7" stroke-linejoin="miter" stroke-miterlimit="3"/>
<polyline points="166.3,1242.3 187.6,1239.9 251.7,1237.9 294.3,1240.5 337,1237.5 358.4,1239.7 422.4,1237.3 443.7,1238.9 550.4,1240.5 593.1,1238.1 614.4,1239.9 657.1,1238.5 699.8,1240.9 742.5,1240.1 806.5,1240.7 827.8,1238.9 891.9,1237.5 913.2,1239.9 955.9,1237.9 998.6,1241.5 1041.2,1239.1 1083.9,1239.9 1169.3,1238.9 1254.6,1240.3 1297.3,1240.1 1340,1237.1 1382.7,1240.1 1468,1239.9 1489.4,1238.5 1510.7,1238.9 1532.1,1239.7 1553.4,1238.1 1574.7,1239.9 1596.1,1239.1 1617.4,1240.1 1638.8,1238.7 1660.1,1237.5 1681.4,1239.3 1702.8,1239.5 1745.5,1239.7 1766.8,1238.9 1788.1,1238.9 1809.5,1239.9 1830.8,1240.1 1852.2,1238.9 1873.5,1240.5 1894.8,1239.9 1916.2,1236.1 1937.5,1240.1 1958.9,1239.7 1980.2,1241.1 2001.5,1237.9 2022.9,1240.5 2044.2,1237.9 2065.6,1238.5 2086.9,1240.9 2108.2,1238.5 2129.6,1239.3 2150.9,1238.9 2172.3,1241.5 2193.6,1241.3 2214.9,1240.1 2236.3,1240.1 2257.6,1240.5 2279,1239.7 2300.3,1240.1 2321.6,1239.5 2343,1239.3 2364.3,1240.5 2385.7,1240.1 2407,1240.9 2428.3,1239.7 2449.7,1240.1 2471,1239.7 2492.4,1240.5 2513.7,1240.5 2535,1239.7 2556.4,1239.7 2577.7,1239.9 2599.1,1239.9 2620.4,1240.5 2641.7,1239.3 2663.1,1240.7 2684.4,1239.7 2705.8,1241.5 2727.1,1239.3 2748.4,1239.3 2769.8,1239.7 2791.1,1238.9 2812.5,1239.9 2833.8,1239.9 2855.1,1238.9 2876.5,1238.8 2919.2,1245.3" fill="none" stroke="#3c9b32" stroke-width="1.7" stroke-linejoin="miter" stroke-miterlimit="3"/>
<polyline points="166.3,1241.5 209,1227.6 273,1239.5 315.7,1227.2 358.4,1238.9 401,1233 465.1,1237.1 486.4,1231.8 550.4,1238.1 593.1,1229.6 614.4,1238.3 678.5,1224.6 699.8,1235.7 763.8,1224.6 785.2,1236.1 827.8,1233.4 891.9,1232.2 913.2,1229.8 977.2,1236.5 1019.9,1237.7 1041.2,1230 1083.9,1234 1105.3,1235.7 1126.6,1225.8 1169.3,1238.9 1233.3,1223.8 1254.6,1238.5 1340,1231 1404,1230.6 1425.4,1235.3 1468,1235.1 1489.4,1229.4 1510.7,1231.4 1532.1,1237.1 1553.4,1230 1574.7,1233.6 1596.1,1230.2 1617.4,1234.9 1638.8,1234 1660.1,1234.4 1681.4,1227.4 1702.8,1233.6 1724.1,1235.5 1745.5,1237.5 1766.8,1231.6 1788.1,1230.4 1809.5,1234.4 1830.8,1232.4 1852.2,1233.4 1873.5,1227.2 1894.8,1236.1 1916.2,1231.6 1937.5,1233.4 1958.9,1223.8 1980.2,1230.4 2001.5,1235.5 2022.9,1234.9 2044.2,1225.6 2065.6,1234 2086.9,1238.9 2108.2,1231.8 2129.6,1228.4 2150.9,1229.8 2172.3,1239.1 2193.6,1232.4 2214.9,1232.8 2236.3,1231.6 2257.6,1230.8 2279,1229.8 2300.3,1233.6 2321.6,1232 2343,1229.8 2364.3,1234.9 2385.7,1235.1 2407,1229.4 2428.3,1231.8 2449.7,1238.9 2471,1230.8 2492.4,1232.8 2513.7,1233.4 2535,1233.6 2556.4,1232.6 2577.7,1229.4 2599.1,1226.8 2620.4,1233.8 2641.7,1237.5 2663.1,1236.7 2684.4,1229.8 2705.8,1234.6 2727.1,1234 2748.4,1233 2769.8,1235.1 2791.1,1234 2812.5,1235.9 2833.8,1229.8 2855.1,1239.9 2876.5,1229 2919.2,1244.7" fill="none" stroke="#787878" stroke-width="1.7" stroke-linejoin="miter" stroke-miterlimit="3"/>
<polyline points="166.3,1204.7 187.6,1174.4 251.7,1188.9 294.3,1191.7 337,1184.1 401,1195.5 443.7,1170.8 486.4,1192.7 529.1,1178.6 571.8,1196.5 614.4,1185.5 635.8,1179.4 678.5,1178.6 763.8,1189.1 785.2,1175 827.8,1193.3 891.9,1185.1 934.5,1192.1 955.9,1183 1019.9,1200.7 1062.6,1171.2 1083.9,1189.7 1126.6,1172.6 1169.3,1188.9 1233.3,1181 1276,1183.6 1318.7,1198.7 1361.3,1179.4 1382.7,1202.7 1425.4,1179.6 1468,1180.4 1489.4,1194.7 1510.7,1181.6 1532.1,1183.2 1553.4,1177.8 1574.7,1182.8 1596.1,1183.9 1617.4,1176.6 1638.8,1179 1660.1,1188.1 1681.4,1185.9 1702.8,1178.8 1724.1,1198.9 1745.5,1187.1 1766.8,1190.5 1788.1,1181 1809.5,1190.7 1830.8,1189.3 1852.2,1193.5 1873.5,1193.5 1894.8,1178.4 1916.2,1177.2 1937.5,1197.3 1958.9,1189.9 1980.2,1174.2 2001.5,1184.5 2022.9,1180.8 2044.2,1173.6 2065.6,1180.2 2086.9,1187.9 2108.2,1178.8 2129.6,1188.9 2150.9,1188.5 2172.3,1184.3 2193.6,1186.3 2214.9,1195.9 2236.3,1196.7 2257.6,1180.2 2279,1178.8 2300.3,1198.7 2321.6,1187.3 2343,1174.2 2364.3,1193.5 2385.7,1182.6 2407,1198.9 2428.3,1185.9 2449.7,1177.2 2471,1178.6 2492.4,1178.4 2513.7,1184.7 2535,1178.4 2556.4,1186.7 2577.7,1182.2 2599.1,1185.9 2620.4,1179.8 2641.7,1193.7 2663.1,1191.5 2684.4,1192.7 2705.8,1188.3 2727.1,1183.2 2748.4,1190.3 2769.8,1194.3 2791.1,1188.3 2812.5,1183.9 2833.8,1177.8 2855.1,1202.3 2876.5,1188.8 2919.2,1226.3" fill="none" stroke="#d571be" stroke-width="1.7" stroke-linejoin="miter" stroke-miterlimit="3"/>
<polyline points="166.3,1034.1 187.6,930.7 230.3,934 273,917.4 315.7,925.7 358.4,917.1 401,925.4 443.7,902.9 486.4,915.6 529.1,1032.9 571.8,907.6 614.4,924.5 657.1,919.3 699.8,905.7 742.5,924.2 785.2,912.8 827.8,919.3 891.9,932.8 913.2,930 955.9,940.5 998.6,924.2 1041.2,930 1083.9,928.8 1126.6,919.3 1169.3,924.2 1212,903.6 1276,919.6 1297.3,914.3 1340,923.9 1382.7,922.6 1425.4,912.5 1468,916.5 1489.4,905.1 1510.7,914.6 1532.1,915.6 1553.4,927.3 1574.7,921.4 1596.1,994.4 1617.4,1023 1638.8,1027.3 1660.1,932.8 1681.4,931.6 1702.8,928.2 1724.1,939 1745.5,926.3 1766.8,907.6 1788.1,910 1809.5,917.7 1830.8,920.2 1852.2,934.3 1873.5,927.6 1894.8,922.6 1916.2,919.3 1937.5,921.4 1958.9,923.6 1980.2,915 2001.5,920.2 2022.9,918 2044.2,917.1 2065.6,913.1 2086.9,914.6 2108.2,920.8 2129.6,916.5 2150.9,926.6 2172.3,917.1 2193.6,910.6 2214.9,922 2236.3,920.8 2257.6,910.3 2279,931.3 2300.3,939 2321.6,929.1 2343,926 2364.3,919 2385.7,917.7 2407,913.4 2428.3,917.1 2449.7,922 2471,907.9 2492.4,914.6 2513.7,923.9 2535,917.1 2556.4,911.9 2577.7,916.2 2599.1,915.6 2620.4,914.6 2641.7,926.3 2663.1,988.8 2684.4,1030.4 2705.8,991.9 2727.1,914 2748.4,919.3 2769.8,914 2791.1,929.4 2812.5,917.7 2833.8,904.5 2855.1,917.4 2876.5,910.6 2919.2,1158.8" fill="none" stroke="#e88332" stroke-width="1.7" stroke-linejoin="miter" stroke-miterlimit="3"/>
<polyline points="166.3,911.3 209,905.7 230.3,699.5 294.3,824.1 337,633 358.4,808.7 401,685 465.1,675.4 486.4,796.1 550.4,778.3 593.1,798.6 614.4,765.6 657.1,752.7 721.1,850 742.5,783.5 806.5,763.2 827.8,852.5 870.5,761.6 934.5,806.6 955.9,734.2 1019.9,738.2 1041.2,827.2 1105.3,741 1126.6,815.5 1169.3,637 1254.6,908.2 1318.7,898.9 1340,836.1 1404,911.3 1425.4,857.1 1468,858.3 1489.4,774.6 1510.7,759.5 1532.1,824.8 1553.4,731.2 1574.7,816.4 1596.1,857.1 1617.4,868.5 1638.8,782.6 1660.1,748.4 1681.4,834.9 1702.8,849.7 1724.1,721.3 1745.5,839.2 1766.8,742.6 1788.1,949.4 1809.5,774.6 1830.8,790 1852.2,817.4 1873.5,841.1 1894.8,803.5 1916.2,579.1 1937.5,761.9 1958.9,747.5 1980.2,911.9 2001.5,707.8 2022.9,741.6 2044.2,829.4 2065.6,779.2 2086.9,742.6 2108.2,728.7 2129.6,778 2150.9,891.9 2172.3,854 2193.6,740.7 2214.9,864.8 2236.3,769.3 2257.6,897.7 2279,845.7 2300.3,706.2 2321.6,738.6 2343,850.9 2364.3,852.1 2385.7,777.3 2407,831.5 2428.3,851.5 2449.7,794.6 2471,822 2492.4,856.5 2513.7,792.4 2535,864.8 2556.4,766.9 2577.7,833.4 2599.1,914.6 2620.4,817.1 2641.7,882 2663.1,803.2 2684.4,857.7 2705.8,787.2 2727.1,860.2 2748.4,752.7 2769.8,828.4 2791.1,770 2812.5,826 2833.8,789.3 2855.1,677 2876.5,703.5 2919.2,1072" fill="none" stroke="#84554b" stroke-width="1.7" stroke-linejoin="miter" stroke-miterlimit="3"/>
<polyline points="166.3,1237.1 209,1199.5 230.3,1215 273,1228 315.7,1208.9 358.4,1229.8 401,1208.5 465.1,1227.4 486.4,1203.7 550.4,1230 571.8,1199.9 635.8,1225.6 657.1,1209.8 699.8,1220.2 763.8,1197.7 785.2,1215.2 849.2,1197.5 870.5,1214.2 934.5,1209.6 977.2,1221 1019.9,1221.2 1041.2,1201.7 1105.3,1227.8 1126.6,1197.5 1169.3,1227.8 1212,1202.9 1254.6,1228.2 1318.7,1207.1 1340,1212.2 1404,1202.3 1446.7,1228.2 1489.4,1193.9 1510.7,1216 1532.1,1227.6 1553.4,1215 1574.7,1210.4 1596.1,1210 1617.4,1220.4 1638.8,1218 1660.1,1221.4 1681.4,1196.3 1702.8,1215 1724.1,1217.8 1745.5,1228.6 1766.8,1205.9 1788.1,1214.8 1809.5,1215 1830.8,1220.4 1852.2,1211.4 1873.5,1212 1894.8,1219.4 1916.2,1212 1937.5,1223.8 1958.9,1196.3 1980.2,1219.4 2001.5,1216.4 2022.9,1226.8 2044.2,1195.3 2065.6,1213 2086.9,1230.8 2108.2,1214 2129.6,1196.9 2150.9,1214.4 2172.3,1222 2193.6,1219 2214.9,1217.8 2236.3,1205.9 2257.6,1210.4 2279,1213.4 2300.3,1228 2321.6,1207.9 2343,1212 2364.3,1214.4 2385.7,1223.8 2407,1191.9 2428.3,1221 2449.7,1222 2471,1214 2492.4,1211.6 2513.7,1213.2 2535,1215.4 2556.4,1223 2577.7,1214 2599.1,1197.3 2620.4,1214.8 2641.7,1224.8 2663.1,1223 2684.4,1198.9 2705.8,1220.8 2727.1,1218.4 2748.4,1214.4 2769.8,1202.7 2791.1,1214.8 2812.5,1225.8 2833.8,1213.8 2855.1,1224.8 2876.5,1199.5 2919.2,1244.7" fill="none" stroke="#8e60be" stroke-width="1.7" stroke-linejoin="miter" stroke-miterlimit="3"/>
<polyline points="166.3,1182.2 187.6,1139.5 251.7,1156.3 273,1143.5 337,1147.5 358.4,1149.9 401,1168.8 465.1,1167 486.4,1186.5 550.4,1190.7 571.8,1163.6 614.4,1188.9 657.1,1150.7 721.1,1145.9 763.8,1163.4 785.2,1149.5 827.8,1143.3 891.9,1160.4 934.5,1140.5 955.9,1157.7 1019.9,1153.1 1062.6,1173.2 1083.9,1174 1126.6,1151.7 1169.3,1167.4 1233.3,1155.7 1276,1197.1 1297.3,1185.1 1340,1193.3 1382.7,1172 1446.7,1173.8 1468,1186.7 1489.4,1187.3 1510.7,1158.8 1532.1,1160.2 1553.4,1145.7 1574.7,1153.7 1596.1,1137.9 1617.4,1152.7 1638.8,1140.1 1660.1,1151.5 1681.4,1156.1 1702.8,1189.3 1724.1,1188.5 1745.5,1186.3 1766.8,1179.8 1788.1,1178.2 1809.5,1185.9 1830.8,1186.9 1852.2,1191.9 1873.5,1192.9 1894.8,1178.8 1916.2,1190.7 1937.5,1187.3 1958.9,1193.9 1980.2,1189.9 2001.5,1192.9 2022.9,1187.7 2044.2,1186.5 2065.6,1191.7 2086.9,1190.1 2108.2,1178.6 2129.6,1185.9 2150.9,1183.2 2172.3,1181.8 2193.6,1184.3 2214.9,1192.1 2236.3,1181.8 2257.6,1178.8 2279,1190.5 2300.3,1180.2 2321.6,1188.3 2343,1184.3 2364.3,1184.7 2385.7,1183.2 2407,1180.4 2428.3,1182.6 2449.7,1190.3 2471,1186.5 2492.4,1184.9 2513.7,1190.9 2535,1185.3 2556.4,1193.1 2577.7,1183.9 2599.1,1183.4 2620.4,1192.3 2641.7,1188.3 2663.1,1186.7 2684.4,1185.9 2705.8,1186.9 2727.1,1183.2 2748.4,1177.6 2769.8,1176.6 2791.1,1172.6 2812.5,1184.7 2833.8,1182.6 2855.1,1176.8 2876.5,1180.6 2919.2,1207.8" fill="none" stroke="#c82d28" stroke-width="1.7" stroke-linejoin="miter" stroke-miterlimit="3"/>
<circle cx="1553.3" cy="1234.2" r="9.7" fill="#58bacd" stroke="none" stroke-width="0"/>
<line x1="111.4" y1="1535" x2="122.6" y2="1547" stroke="#1f2937" stroke-width="3.3" stroke-linecap="round"/>
<line x1="122.6" y1="1535" x2="111.4" y2="1547" stroke="#1f2937" stroke-width="3.3" stroke-linecap="round"/>
<line x1="205" y1="1533" x2="219.2" y2="1549" stroke="#cccccc" stroke-width="4" stroke-linecap="round"/>
<line x1="219.2" y1="1533" x2="205" y2="1549" stroke="#cccccc" stroke-width="4" stroke-linecap="round"/>
<path d="M276.6 1537.6 L286 1546.4 L295.4 1537.6" fill="none" stroke="#cccccc" stroke-width="4" stroke-linejoin="round" stroke-linecap="round"/>
<line x1="379.4" y1="1532.9" x2="387.5" y2="1532.9" stroke="#3f4856" stroke-width="1.9" stroke-linecap="butt"/>
<line x1="379.4" y1="1540.9" x2="389.3" y2="1540.9" stroke="#3f4856" stroke-width="1.9" stroke-linecap="butt"/>
<line x1="379.4" y1="1549" x2="397.5" y2="1549" stroke="#3f4856" stroke-width="1.9" stroke-linecap="butt"/>
<line x1="397" y1="1543.4" x2="397" y2="1531.2" stroke="#3f4856" stroke-width="1.9" stroke-linecap="butt"/>
<path d="M391.6 1536 L397 1530.6 L402.4 1536" fill="none" stroke="#3f4856" stroke-width="1.9" stroke-linejoin="miter" stroke-linecap="butt"/>
<path d="M722.6 1530.3 L741 1530.3 L734.7 1538.7 L734.7 1551.4 L729.6 1546.6 L729.6 1538.7 Z" fill="none" stroke="#4b5563" stroke-width="2.6" stroke-linejoin="round" stroke-linecap="round"/>
<line x1="2199.6" y1="1534.9" x2="2216.5" y2="1534.9" stroke="#4b5563" stroke-width="2.6" stroke-linecap="round"/>
<circle cx="2221.1" cy="1534.9" r="4.5" fill="none" stroke="#4b5563" stroke-width="2.5"/>
<line x1="2209.6" y1="1546.9" x2="2226.5" y2="1546.9" stroke="#4b5563" stroke-width="2.6" stroke-linecap="round"/>
<circle cx="2204.8" cy="1546.9" r="4.5" fill="none" stroke="#4b5563" stroke-width="2.5"/>
<circle cx="2529.8" cy="1531.6" r="3.9" fill="#4b5563" stroke="none" stroke-width="0"/>
<circle cx="2513.6" cy="1540.9" r="3.9" fill="#4b5563" stroke="none" stroke-width="0"/>
<circle cx="2529.8" cy="1550.2" r="3.9" fill="#4b5563" stroke="none" stroke-width="0"/>
<path d="M2529.8 1531.6 L2513.6 1540.9 L2529.8 1550.2" fill="none" stroke="#4b5563" stroke-width="2.1" stroke-linejoin="round" stroke-linecap="round"/>
<path d="M2421 1538.6 L2426.95 1546 L2432.9 1538.6" fill="none" stroke="#6b7280" stroke-width="2" stroke-linejoin="round" stroke-linecap="round"/>
<path d="M2648.2 1538.6 L2654.1 1546 L2660 1538.6" fill="none" stroke="#6b7280" stroke-width="2" stroke-linejoin="round" stroke-linecap="round"/>
<path d="M2924.5 1537 L2929.8 1531.6 L2935.1 1537" fill="none" stroke="#9ca3af" stroke-width="2" stroke-linejoin="round" stroke-linecap="round"/>
<path d="M2924.5 1545.2 L2929.8 1550.6 L2935.1 1545.2" fill="none" stroke="#9ca3af" stroke-width="2" stroke-linejoin="round" stroke-linecap="round"/>
<path d="M225.4 1674.4 A15.15 15.15 0 1 1 222.65 1682.6" fill="none" stroke="#9ca3af" stroke-width="1.8" stroke-linejoin="round" stroke-linecap="round" />
<path d="M224.4 1667 L224.4 1675.4 L232.8 1675.4" fill="none" stroke="#9ca3af" stroke-width="1.8" stroke-linejoin="miter" stroke-linecap="butt"/>
<circle cx="2945.9" cy="1736.9" r="11.75" fill="none" stroke="#5d6576" stroke-width="2.7"/>
<line x1="2945.9" y1="1736" x2="2945.9" y2="1743.6" stroke="#5d6576" stroke-width="2.4" stroke-linecap="butt"/>
<line x1="2945.9" y1="1730.2" x2="2945.9" y2="1732.6" stroke="#5d6576" stroke-width="2.4" stroke-linecap="butt"/>
</svg>
<span class="t" style="left:98.70px;top:33.68px;font-size:59.8px;color:#1e2533;letter-spacing:-1.094px;-webkit-text-stroke:0.6px #1e2533;">Polar Signals</span>
<span class="t" style="left:539.40px;top:55.77px;font-size:28.5px;color:#374151;letter-spacing:0.244px;-webkit-text-stroke:0.45px #374151;">Polar Signals</span>
<span class="t" style="left:854.00px;top:53.90px;font-size:28px;color:#374151;letter-spacing:1.412px;-webkit-text-stroke:0.45px #374151;">Production</span>
<span class="t" style="left:2353.70px;top:53.50px;font-size:31.3px;color:#1f2937;letter-spacing:0.722px;-webkit-text-stroke:0.3px #1f2937;">Help Center</span>
<span class="t" style="left:2865.40px;top:56.53px;font-size:29.5px;color:#1f2937;letter-spacing:-1.476px;-webkit-text-stroke:0.3px #1f2937;">YE</span>
<span class="t" style="left:99.70px;top:168.32px;font-size:27.5px;color:#1f2937;letter-spacing:0.793px;-webkit-text-stroke:0.3px #1f2937;">Profiler</span>
<span class="t" style="left:321.00px;top:170.52px;font-size:27.5px;color:#1f2937;letter-spacing:0.699px;-webkit-text-stroke:0.3px #1f2937;">Compare</span>
<span class="t" style="left:566.90px;top:170.22px;font-size:27.5px;color:#1f2937;letter-spacing:0.356px;-webkit-text-stroke:0.3px #1f2937;">GPU Profiler</span>
<span class="t" style="left:852.60px;top:170.42px;font-size:27.5px;color:#1f2937;letter-spacing:0.950px;-webkit-text-stroke:0.3px #1f2937;">Project Settings</span>
<span class="t" style="left:50.80px;top:256.50px;font-size:28px;color:#1f2937;letter-spacing:0.522px;-webkit-text-stroke:0.3px #1f2937;">Default View</span>
<span class="t" style="left:294.50px;top:256.50px;font-size:28px;color:#1f2937;letter-spacing:0.441px;-webkit-text-stroke:0.3px #1f2937;">Prefiltered label values</span>
<span class="t" style="left:667.80px;top:256.50px;font-size:28px;color:#1f2937;letter-spacing:0.642px;-webkit-text-stroke:0.3px #1f2937;">Sum by “Pod” label</span>
<span class="t" style="left:996.00px;top:256.50px;font-size:28px;color:#1f2937;letter-spacing:0.379px;-webkit-text-stroke:0.3px #1f2937;">Streamlined label names</span>
<span class="t" style="left:1392.00px;top:254.90px;font-size:28px;color:#1f2937;letter-spacing:0.543px;-webkit-text-stroke:0.3px #1f2937;">Grouped By "Pod" View</span>
<span class="t" style="left:2517.60px;top:256.70px;font-size:28px;color:#4b5563;letter-spacing:0.378px;-webkit-text-stroke:0.3px #4b5563;">New View</span>
<span class="t" style="left:2762.60px;top:256.70px;font-size:28px;color:#4b5563;letter-spacing:0.555px;-webkit-text-stroke:0.3px #4b5563;">View Settings</span>
<span class="t" style="left:11.80px;top:350.51px;font-size:23.5px;color:#1f2937;letter-spacing:1.019px;-webkit-text-stroke:0.3px #1f2937;">Profile type</span>
<span class="t" style="left:248.00px;top:345.91px;font-size:23.5px;color:#1f2937;letter-spacing:0.614px;-webkit-text-stroke:0.3px #1f2937;">Query</span>
<span class="t" style="left:453.00px;top:345.91px;font-size:23.5px;color:#1f2937;letter-spacing:0.936px;-webkit-text-stroke:0.3px #1f2937;">Advanced Mode</span>
<span class="t" style="left:46.40px;top:410.00px;font-size:28px;color:#111827;letter-spacing:0.186px;-webkit-text-stroke:0.3px #111827;">On-CPU</span>
<span class="t" style="left:282.00px;top:410.00px;font-size:28px;color:#111827;letter-spacing:0.331px;-webkit-text-stroke:0.3px #111827;">Select label name</span>
<span class="t" style="left:621.60px;top:410.00px;font-size:28px;color:#111827;letter-spacing:0.097px;-webkit-text-stroke:0.3px #111827;">Equals</span>
<span class="t" style="left:819.80px;top:410.00px;font-size:28px;color:#9ca3af;letter-spacing:0.353px;-webkit-text-stroke:0.3px #9ca3af;">Select label value</span>
<span class="t" style="left:1961.50px;top:350.61px;font-size:23.5px;color:#1f2937;letter-spacing:0.716px;-webkit-text-stroke:0.3px #1f2937;">Sum by</span>
<span class="t" style="left:1982.80px;top:404.31px;font-size:30px;color:#808080;letter-spacing:-0.459px;-webkit-text-stroke:0.3px #808080;">Labels...</span>
<span class="t" style="left:2202.40px;top:351.11px;font-size:23.5px;color:#1f2937;letter-spacing:0.205px;-webkit-text-stroke:0.3px #1f2937;">Range</span>
<span class="t" style="left:2473.80px;top:409.80px;font-size:28px;color:#111827;letter-spacing:0.528px;-webkit-text-stroke:0.3px #111827;">15m</span>
<span class="t" style="left:2852.90px;top:409.57px;font-size:28.5px;color:#f4f4f8;letter-spacing:-0.630px;font-weight:700;">Search</span>
<span class="t" style="left:109.35px;top:532.65px;font-size:20px;color:#1f2937;-webkit-text-stroke:0.3px #1f2937;">120</span>
<span class="t" style="left:109.35px;top:649.97px;font-size:20px;color:#1f2937;-webkit-text-stroke:0.3px #1f2937;">100</span>
<span class="t" style="left:120.48px;top:767.29px;font-size:20px;color:#1f2937;-webkit-text-stroke:0.3px #1f2937;">80</span>
<span class="t" style="left:120.48px;top:884.61px;font-size:20px;color:#1f2937;-webkit-text-stroke:0.3px #1f2937;">60</span>
<span class="t" style="left:120.48px;top:1001.93px;font-size:20px;color:#1f2937;-webkit-text-stroke:0.3px #1f2937;">40</span>
<span class="t" style="left:120.48px;top:1119.25px;font-size:20px;color:#1f2937;-webkit-text-stroke:0.3px #1f2937;">20</span>
<span class="t" style="left:131.60px;top:1236.57px;font-size:20px;color:#1f2937;-webkit-text-stroke:0.3px #1f2937;">0</span>
<span class="t" style="left:984.50px;top:1262.65px;font-size:20.5px;color:#1f2937;letter-spacing:0.725px;-webkit-text-stroke:0.3px #1f2937;">16:35</span>
<span class="t" style="left:1905.60px;top:1262.65px;font-size:20.5px;color:#1f2937;letter-spacing:0.725px;-webkit-text-stroke:0.3px #1f2937;">16:40</span>
<span class="t" style="left:2827.10px;top:1262.65px;font-size:20.5px;color:#1f2937;letter-spacing:0.725px;-webkit-text-stroke:0.3px #1f2937;">16:45</span>
<span class="t" style="left:1488.60px;top:1304.32px;font-size:27.5px;color:#1f2937;letter-spacing:0.535px;-webkit-text-stroke:0.3px #1f2937;">Time</span>
<span class="t" style="left:2698.00px;top:1315.30px;font-size:28px;color:#374151;letter-spacing:0.905px;-webkit-text-stroke:0.45px #374151;">Hide Metrics Graph</span>
<span class="t" style="left:10.80px;top:1418.88px;font-size:24.6px;color:#1f2937;letter-spacing:1.062px;-webkit-text-stroke:0.45px #1f2937;">Merged profiles of query over 6s from 2025-09-09 16:37:54 to 2025-09-09 16:38:01</span>
<span class="t" style="left:11.80px;top:1469.02px;font-size:27.5px;color:#1f2937;letter-spacing:0.676px;-webkit-text-stroke:0.3px #1f2937;">Group by</span>
<span class="t" style="left:46.20px;top:1528.54px;font-size:25px;color:#333333;letter-spacing:0.296px;-webkit-text-stroke:0.3px #333333;">pod</span>
<span class="t" style="left:421.20px;top:1527.30px;font-size:28px;color:#374151;letter-spacing:0.310px;-webkit-text-stroke:0.3px #374151;">Invert Call Stack</span>
<span class="t" style="left:763.70px;top:1527.00px;font-size:28px;color:#374151;letter-spacing:0.481px;-webkit-text-stroke:0.3px #374151;">Filter</span>
<span class="t" style="left:2244.90px;top:1526.70px;font-size:28px;color:#374151;letter-spacing:0.474px;-webkit-text-stroke:0.3px #374151;">Preferences</span>
<span class="t" style="left:2555.00px;top:1526.70px;font-size:28px;color:#374151;letter-spacing:-0.186px;-webkit-text-stroke:0.3px #374151;">Share</span>
<span class="t" style="left:2735.50px;top:1526.70px;font-size:28px;color:#111827;letter-spacing:0.118px;-webkit-text-stroke:0.3px #111827;">Flame Graph</span>
<span class="t" style="left:45.80px;top:1669.20px;font-size:28px;color:#9ca3af;letter-spacing:0.414px;-webkit-text-stroke:0.3px #9ca3af;">Reset graph</span>
<span class="t rot" id="cpucores" style="left:18.6901px;top:965.1px;font-size:28.6px;color:#1f2937;letter-spacing:-0.5px">CPU Cores</span>
</div>
</body></html>
